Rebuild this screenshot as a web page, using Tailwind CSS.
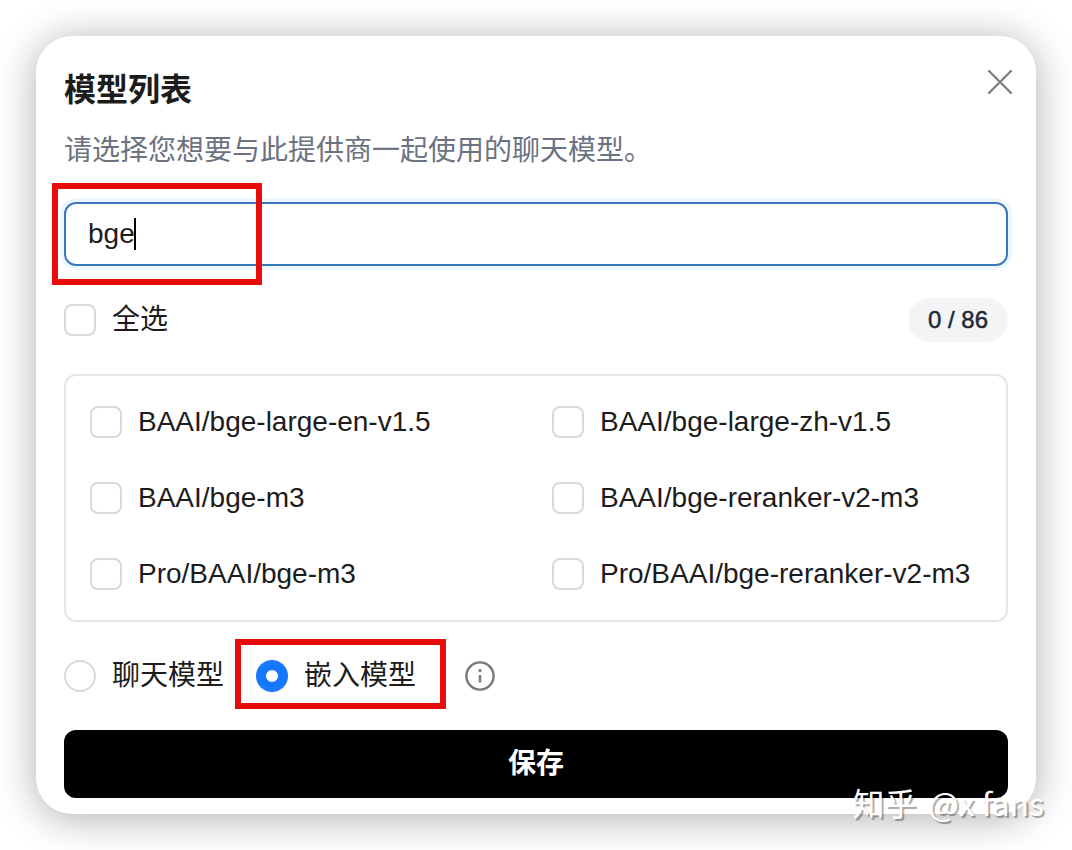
<!DOCTYPE html>
<html lang="zh-CN">
<head>
    <meta charset="UTF-8">
    <meta name="viewport" content="width=device-width, initial-scale=1.0">
    <title>模型列表</title>
    <script src="https://cdn.jsdelivr.net/npm/@tailwindcss/browser@4"></script>
</head>
<body class="relative min-h-screen bg-white p-9 font-['Liberation_Sans','Noto_Sans_CJK_SC',sans-serif] text-[28px] leading-[44px] text-[#1c1c1c]">
    <!-- Dialog -->
    <main role="dialog" aria-labelledby="dialogTitle" class="relative rounded-[36px] bg-white px-7 pt-[30px] pb-4 shadow-[0_4px_40px_rgba(0,0,0,0.32)]">
        <button type="button" aria-label="关闭" class="absolute top-[30px] right-5 p-1 text-[#808080]">
            <svg class="size-6" viewBox="0 0 24 24" fill="none" stroke="currentColor" stroke-width="2.4" stroke-linecap="round">
                <path d="M1 1l22 22M23 1L1 23"/>
            </svg>
        </button>

        <h1 id="dialogTitle" class="text-[32px] leading-[48px] font-bold">模型列表</h1>
        <p class="mt-4 leading-[42px] text-[#6b7280]">请选择您想要与此提供商一起使用的聊天模型。</p>

        <!-- Search -->
        <div class="relative mt-[30px]">
            <input type="text" value="bge" aria-label="搜索模型" class="block h-16 w-full rounded-xl border-2 border-[#3b77bd] bg-white px-[22px] caret-transparent shadow-[0_0_0_4px_rgba(5,145,255,0.07)] outline-none">
            <span class="absolute top-4 left-[70px] h-8 w-[2px] bg-black"></span>
            <div class="pointer-events-none absolute -top-[19px] -left-3 h-[102px] w-[210px] border-6 border-[#e90c0c]"></div>
        </div>

        <!-- Select all -->
        <div class="mt-8 flex items-center justify-between">
            <label class="flex items-center gap-4">
                <input type="checkbox" class="size-8 appearance-none rounded-lg border-2 border-[#d9d9d9] bg-white">
                全选
            </label>
            <span class="rounded-full bg-[#f3f4f6] px-5 text-2xl leading-[44px] font-medium text-[#1f2937] [-webkit-text-stroke:0.5px]">0 / 86</span>
        </div>

        <!-- Models -->
        <div class="mt-8 grid grid-cols-2 gap-8 rounded-xl border-2 border-[#e5e5e5] p-6">
            <label class="flex items-center gap-4 whitespace-nowrap">
                <input type="checkbox" class="size-8 appearance-none rounded-lg border-2 border-[#d9d9d9] bg-white">
                BAAI/bge-large-en-v1.5
            </label>
            <label class="flex items-center gap-4 whitespace-nowrap">
                <input type="checkbox" class="size-8 appearance-none rounded-lg border-2 border-[#d9d9d9] bg-white">
                BAAI/bge-large-zh-v1.5
            </label>
            <label class="flex items-center gap-4 whitespace-nowrap">
                <input type="checkbox" class="size-8 appearance-none rounded-lg border-2 border-[#d9d9d9] bg-white">
                BAAI/bge-m3
            </label>
            <label class="flex items-center gap-4 whitespace-nowrap">
                <input type="checkbox" class="size-8 appearance-none rounded-lg border-2 border-[#d9d9d9] bg-white">
                BAAI/bge-reranker-v2-m3
            </label>
            <label class="flex items-center gap-4 whitespace-nowrap">
                <input type="checkbox" class="size-8 appearance-none rounded-lg border-2 border-[#d9d9d9] bg-white">
                Pro/BAAI/bge-m3
            </label>
            <label class="flex items-center gap-4 whitespace-nowrap">
                <input type="checkbox" class="size-8 appearance-none rounded-lg border-2 border-[#d9d9d9] bg-white">
                Pro/BAAI/bge-reranker-v2-m3
            </label>
        </div>

        <!-- Model type -->
        <div class="mt-8 flex items-center gap-8">
            <label class="flex items-center gap-4">
                <input type="radio" name="modelType" class="size-8 appearance-none rounded-full border-2 border-[#d9d9d9] bg-white">
                聊天模型
            </label>
            <label class="relative flex items-center gap-4">
                <input type="radio" name="modelType" checked class="size-8 appearance-none rounded-full border-10 border-[#1677ff] bg-white">
                嵌入模型
                <span class="pointer-events-none absolute -top-[15px] -left-[21px] h-[70px] w-[211px] border-6 border-[#e90c0c]"></span>
            </label>
            <button type="button" aria-label="说明" class="ml-4 text-[#75787d]">
                <svg class="size-8" viewBox="0 0 32 32" fill="none" stroke="currentColor" stroke-width="2.4">
                    <circle cx="16" cy="16" r="13.6"/>
                    <path d="M16 15v7.4"/>
                    <circle cx="16" cy="10.6" r="1.6" fill="currentColor" stroke="none"/>
                </svg>
            </button>
        </div>

        <button type="button" class="mt-8 h-[68px] w-full rounded-xl bg-black font-bold text-white">保存</button>
    </main>

    <!-- Watermark -->
    <div class="pointer-events-none absolute right-7 bottom-6 flex gap-3 font-['Noto_Sans_CJK_SC',sans-serif] text-[32px] leading-[48px] whitespace-nowrap text-white [text-shadow:2px_2px_1px_rgba(0,0,0,0.35)]">
        <span>知乎</span>
        <span>@x fans</span>
    </div>
</body>
</html>
